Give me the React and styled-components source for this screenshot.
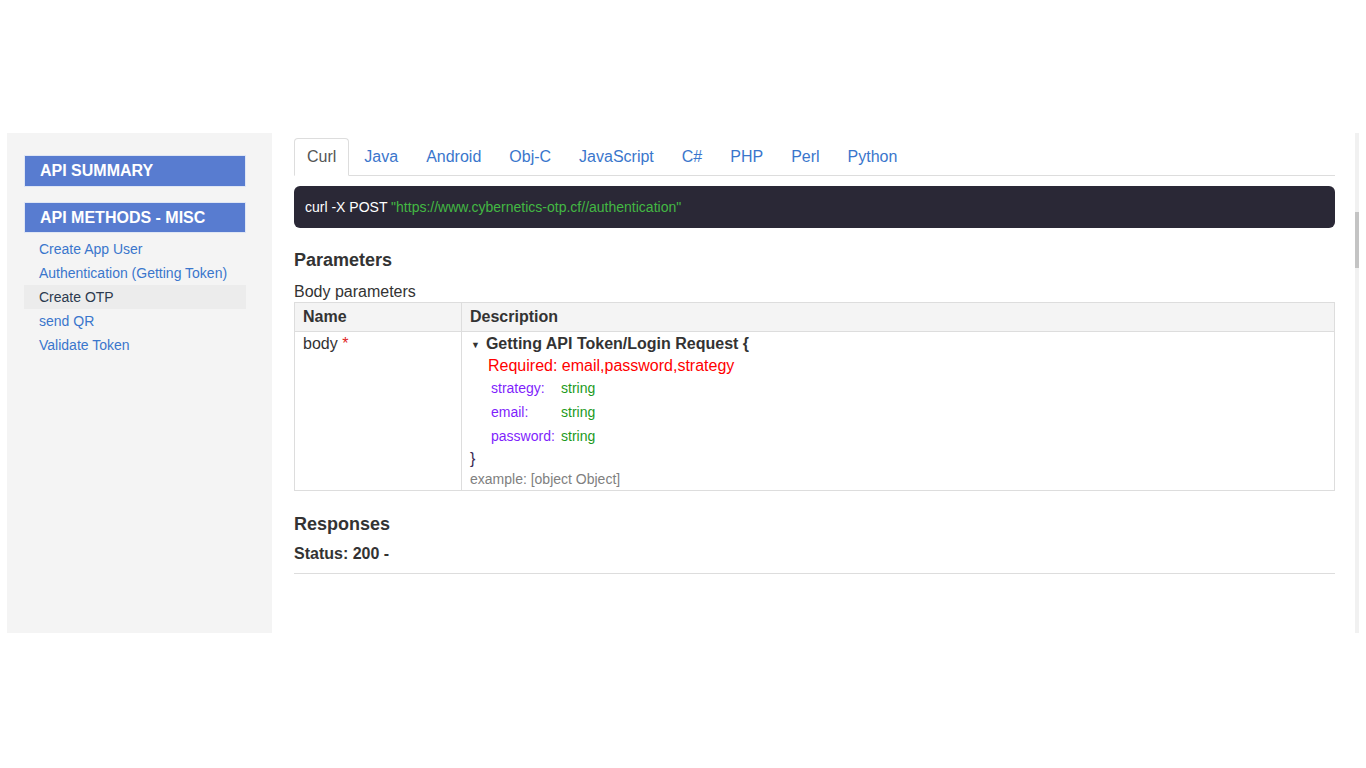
import React from "react";
import styled, { createGlobalStyle } from "styled-components";

const Global = createGlobalStyle`
  html, body { margin: 0; padding: 0; background: #fff; }
  body { font-family: "Liberation Sans", Arial, sans-serif; color: #333; }
  * { box-sizing: border-box; }
`;

const Page = styled.div`
  padding: 133px 7px 0 7px;
`;

const Shell = styled.div`
  display: flex;
  width: 1352px;
  height: 500px;
`;

const Sidebar = styled.aside`
  width: 265px;
  flex: none;
  background: #f4f4f4;
  padding: 22px 26px 0 17px;
`;

const SideHeader = styled.div`
  height: ${(p) => (p.$tall ? 32 : 31)}px;
  margin-bottom: ${(p) => p.$mb}px;
  background: #587cd0;
  border: 1px solid #dfe6f4;
  color: #fff;
  font-weight: bold;
  font-size: 16px;
  line-height: 29px;
  padding-left: 15px;
`;

const SideList = styled.ul`
  list-style: none;
  margin: 4px 0 0;
  padding: 0;
`;

const SideItem = styled.li`
  height: 24px;
  line-height: 24px;
  font-size: 14px;
  padding-left: 15px;
  background: ${(p) => (p.$active ? "#ececec" : "transparent")};
  color: ${(p) => (p.$active ? "#2b3a4e" : "#3a76cc")};
`;

const Pane = styled.main`
  flex: 1;
  padding: 5px 20px 0 22px;
  background: #fff;
`;

const Tabs = styled.ul`
  display: flex;
  list-style: none;
  margin: 0;
  padding: 0;
  border-bottom: 1px solid #ddd;
`;

const Tab = styled.li`
  margin-right: 2px;
  margin-bottom: -1px;
  padding: 8px 12px;
  line-height: 20px;
  font-size: 16px;
  border: 1px solid ${(p) => (p.$active ? "#ddd" : "transparent")};
  border-bottom-color: ${(p) => (p.$active ? "#fff" : "transparent")};
  border-radius: 4px 4px 0 0;
  background: ${(p) => (p.$active ? "#fff" : "transparent")};
  color: ${(p) => (p.$active ? "#555" : "#3a76cc")};
`;

const Code = styled.pre`
  margin: 10px 0 0;
  padding: 11px 11px;
  background: #2a2836;
  border-radius: 6px;
  color: #fff;
  font-family: "Liberation Sans", Arial, sans-serif;
  font-size: 14px;
  line-height: 20px;
`;

const Str = styled.span`
  color: #43b843;
`;

const Heading = styled.h3`
  margin: ${(p) => p.$mt}px 0 0;
  font-size: 18px;
  line-height: 22px;
  font-weight: bold;
  color: #333;
`;

const SubLabel = styled.div`
  margin-top: 11px;
  font-size: 16px;
  line-height: 20px;
`;

const Table = styled.table`
  width: 100%;
  margin-top: 0;
  border-collapse: collapse;
  font-size: 16px;
`;

const Th = styled.th`
  text-align: left;
  background: #f4f4f4;
  border: 1px solid #ddd;
  padding: 4px 8px;
  line-height: 20px;
  font-weight: bold;
  width: ${(p) => p.$w || "auto"};
`;

const Td = styled.td`
  border: 1px solid #ddd;
  padding: 1px 8px 1px;
  vertical-align: top;
  line-height: 22px;
`;

const Star = styled.span`
  color: #e0261f;
`;

const ModelTitle = styled.div`
  height: 22px;
  padding-left: 1px;
  font-weight: bold;
  line-height: 22px;
  display: flex;
  align-items: center;
`;

const Caret = styled.span`
  font-size: 9px;
  line-height: 1;
  margin-right: 6px;
  margin-top: 3px;
`;

const Required = styled.div`
  padding-left: 18px;
  color: #f00;
  line-height: 22px;
`;

const Props = styled.div`
  padding-left: 21px;
  display: grid;
  grid-template-columns: 70px auto;
  grid-auto-rows: 24px;
  align-items: start;
  font-size: 14px;
  line-height: 22px;
`;

const PropName = styled.span`
  color: #7f1ffc;
`;

const PropType = styled.span`
  color: #1c9a1c;
`;

const Brace = styled.div`
  line-height: 20px;
  color: #3a2a55;
`;

const Example = styled.div`
  font-size: 14px;
  line-height: 20px;
  color: #808080;
`;

const Status = styled.div`
  margin-top: 9px;
  font-size: 16px;
  line-height: 20px;
  font-weight: bold;
`;

const Rule = styled.hr`
  margin: 9px 0 0;
  border: 0;
  border-top: 1px solid #ddd;
`;

const Track = styled.div`
  width: 4px;
  flex: none;
  background: #f1f1f1;
`;

const Thumb = styled.div`
  margin-top: 79px;
  height: 56px;
  background: #c4c4c4;
`;

const tabs = ["Curl", "Java", "Android", "Obj-C", "JavaScript", "C#", "PHP", "Perl", "Python"];
const links = ["Create App User", "Authentication (Getting Token)", "Create OTP", "send QR", "Validate Token"];
const props = [
  ["strategy:", "string"],
  ["email:", "string"],
  ["password:", "string"],
];

export default function App() {
  return (
    <Page>
      <Global />
      <Shell>
        <Sidebar>
          <SideHeader $tall $mb={15}>API SUMMARY</SideHeader>
          <SideHeader $mb={0}>API METHODS - MISC</SideHeader>
          <SideList>
            {links.map((l) => (
              <SideItem key={l} $active={l === "Create OTP"}>{l}</SideItem>
            ))}
          </SideList>
        </Sidebar>
        <Pane>
          <Tabs>
            {tabs.map((t) => (
              <Tab key={t} $active={t === "Curl"}>{t}</Tab>
            ))}
          </Tabs>
          <Code>
            curl -X POST <Str>"https://www.cybernetics-otp.cf//authentication"</Str>
          </Code>
          <Heading $mt={21}>Parameters</Heading>
          <SubLabel>Body parameters</SubLabel>
          <Table>
            <thead>
              <tr>
                <Th $w="167px">Name</Th>
                <Th>Description</Th>
              </tr>
            </thead>
            <tbody>
              <tr>
                <Td>
                  body <Star>*</Star>
                </Td>
                <Td>
                  <ModelTitle>
                    <Caret>▼</Caret>
                    <span>Getting API Token/Login Request {"{"}</span>
                  </ModelTitle>
                  <Required>Required: email,password,strategy</Required>
                  <Props>
                    {props.map(([n, t]) => (
                      <React.Fragment key={n}>
                        <PropName>{n}</PropName>
                        <PropType>{t}</PropType>
                      </React.Fragment>
                    ))}
                  </Props>
                  <Brace>{"}"}</Brace>
                  <Example>example: [object Object]</Example>
                </Td>
              </tr>
            </tbody>
          </Table>
          <Heading $mt={22}>Responses</Heading>
          <Status>Status: 200 -</Status>
          <Rule />
        </Pane>
        <Track>
          <Thumb />
        </Track>
      </Shell>
    </Page>
  );
}
